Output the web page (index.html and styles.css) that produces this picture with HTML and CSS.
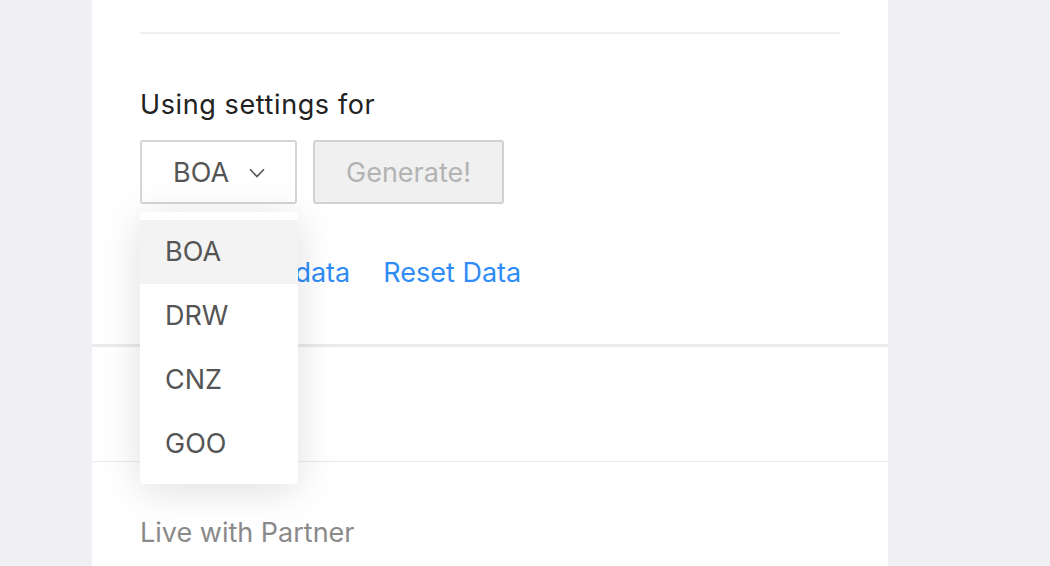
FILE: index.html
```html
<!DOCTYPE html>
<html>
<head>
<meta charset="utf-8">
<link rel="stylesheet" href="styles.css">
</head>
<body>
<div class="page">
  <div class="panel">
    <section class="sec sec-settings">
      <div class="rule"></div>
      <div class="label">Using settings for</div>
      <div class="controls">
        <div class="select-wrap">
          <div class="select">
            <span>BOA</span>
            <svg class="chev" width="16" height="10" viewBox="0 0 16 10"><path d="M1 1.2 L8 8.6 L15 1.2" fill="none" stroke="#555" stroke-width="1.6"/></svg>
          </div>
          <ul class="menu">
            <li class="active">BOA</li>
            <li>DRW</li>
            <li>CNZ</li>
            <li>GOO</li>
          </ul>
        </div>
        <button class="gen" disabled>Generate!</button>
      </div>
      <div class="links">
        <a class="link">Export user data</a>
        <a class="link">Reset Data</a>
      </div>
    </section>
    <section class="sec sec-empty"></section>
    <section class="sec sec-live">
      <div class="muted">Live with Partner</div>
    </section>
  </div>
</div>
</body>
</html>
```

FILE: styles.css
```css
html, body {
  margin: 0;
  padding: 0;
  height: 100%;
  overflow: hidden;
}
body {
  background: #efeff4;
  font-family: Inter, "Liberation Sans", sans-serif;
  font-size: 27px;
  color: #262626;
}
.page {
  padding-left: 92px;
  height: 100%;
}
.panel {
  width: 796px;
  background: #fff;
  height: 100%;
}
.sec {
  padding: 0 48px;
}
.sec-settings {
  height: 344px;
  padding-top: 32px;
  box-sizing: border-box;
}
.rule {
  height: 2px;
  background: #eeeeee;
}
.label {
  margin-top: 53px;
  line-height: 36px;
  color: #222;
  letter-spacing: 0.6px;
}
.controls {
  display: flex;
  gap: 16px;
  margin-top: 17px;
}
.select-wrap {
  position: relative;
}
.select {
  width: 157px;
  height: 64px;
  box-sizing: border-box;
  border: 2px solid #d6d6d6;
  border-radius: 3px;
  display: flex;
  align-items: center;
  padding-left: 31px;
  gap: 20px;
  color: #555;
}
.chev {
  margin-top: 2px;
}
.gen {
  width: 191px;
  height: 64px;
  box-sizing: border-box;
  border: 2px solid #d2d2d2;
  border-radius: 3px;
  background: #f0f0f0;
  color: #b3b3b3;
  font-family: inherit;
  font-size: 27px;
  padding: 0;
}
.menu {
  position: absolute;
  top: 72px;
  left: 0;
  width: 158px;
  margin: 0;
  padding: 8px 0;
  list-style: none;
  background: #fff;
  border-radius: 4px;
  box-shadow: 0 6px 40px rgba(0, 0, 0, 0.13);
  z-index: 10;
}
.menu li {
  height: 64px;
  line-height: 64px;
  padding-left: 25px;
  color: #555;
}
.menu li.active {
  background: #f3f3f3;
}
.links {
  display: flex;
  gap: 33px;
  margin-top: 51px;
  line-height: 36px;
}
.link {
  color: #2f8cf5;
}
.sec-empty {
  height: 114px;
  border-top: 3px solid #ebebeb;
  border-bottom: 1px solid #ebebeb;
  box-sizing: content-box;
}
.sec-live {
  padding-top: 53px;
}
.muted {
  color: #8a8a8a;
  line-height: 36px;
}
```
